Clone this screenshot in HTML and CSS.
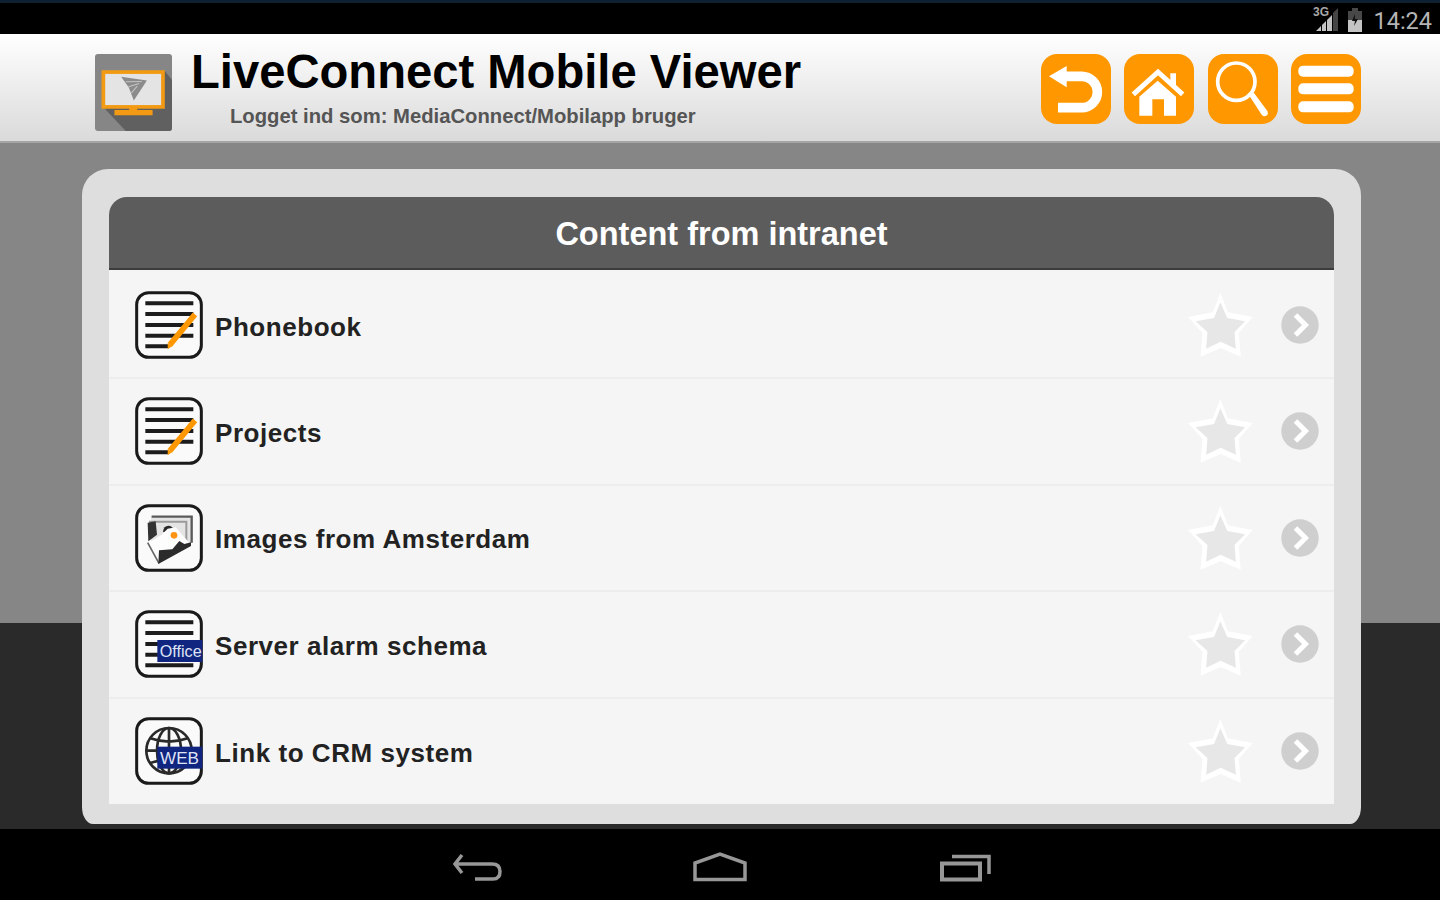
FILE: index.html
```
<!DOCTYPE html>
<html lang="da">

<head>
  <meta charset="utf-8">
  <meta content="width=device-width, initial-scale=1.0" name="viewport">
  <title>LiveConnect Mobile Viewer</title>
  <link rel="stylesheet" href="styles.css">
</head>

<body>

  <!-- Shared icons -->
  <svg class="sprite" aria-hidden="true">
    <symbol id="icon-frame" viewBox="0 0 204 204">
      <rect x="5" y="5" width="194" height="194" rx="36" fill="#fafafa" stroke="#1a1a1a" stroke-width="9"/>
    </symbol>
    <symbol id="icon-note" viewBox="0 0 204 204">
      <use href="#icon-frame"/>
      <path d="M31 37H175M31 69H175M31 102H175M31 134H175M31 166H102" stroke="#1c1c1c" stroke-width="12"/>
      <path d="M105 161L180 70" stroke="#ff9800" stroke-width="17"/>
      <path d="M98 155L112 166L98 174Z" fill="#ff9800"/>
    </symbol>
    <symbol id="icon-star" viewBox="0 0 200 200">
      <polygon points="98,2 121,61 196,76 154,124 160,196 99,170 38,196 44,124 0,76 75,61" fill="#fff"/>
      <polygon points="98,31 119,79 173,89 141,121 145,172 99,151 55,172 59,121 23,89 79,79" fill="#e7e7e7"/>
    </symbol>
    <symbol id="icon-next" viewBox="0 0 38 38">
      <circle cx="19" cy="19" r="18.700" fill="#cfcfcf"/>
      <path d="M14.500 9L24.500 19L14.500 29" fill="none" stroke="#fff" stroke-width="5"/>
    </symbol>
  </svg>

  <div class="status-bar">
    <svg class="signal" viewBox="0 0 26 26">
      <path d="M25 2V25H20V7Z" fill="#454545"/>
      <path d="M3 25L8 20V25ZM9 19L13 15V25H9ZM14 14L19 9V25H14Z" fill="#c4c4c4"/>
      <text x="0" y="10" font-size="12" fill="#a8a8a8">3G</text>
    </svg>
    <svg class="battery" viewBox="0 0 16 24">
      <path d="M5 0H11V3H15V24H1V3H5Z" fill="#484848"/>
      <rect x="1" y="12" width="14" height="12" fill="#c4c4c4"/>
      <path d="M8 6L5 13H8L7 18L11 11H8Z" fill="#111"/>
    </svg>
    <span class="clock">14:24</span>
  </div>

  <header class="header">
    <svg class="logo" viewBox="0 0 230 230">
      <rect width="230" height="230" rx="9" fill="#868686"/>
      <path d="M30 164L92 230H221A9 9 0 0 0 230 221V78L208 50Z" fill="#606060"/>
      <rect x="25" y="54" width="178" height="104" fill="#e4e4e4" stroke="#f39a14" stroke-width="11"/>
      <path d="M102 158H126V167H172V183H58V167H102Z" fill="#f39a14"/>
      <path d="M78 68L155 79L116 139L101 100Z" fill="#8b8b8b"/>
      <path d="M92 83L140 82M100 98L132 88M109 116L126 96" stroke="#c4c4c4" stroke-width="3"/>
    </svg>
    <div class="titles">
      <h1>LiveConnect Mobile Viewer</h1>
      <p>Logget ind som: MediaConnect/Mobilapp bruger</p>
    </div>
    <nav class="toolbar">
      <a href="#back" aria-label="Back">
        <svg viewBox="0 0 210 210">
          <path d="M24 67L77 36V100Z" fill="#fff"/>
          <path d="M74 67H122A47 47 0 0 1 122 161H51" fill="none" stroke="#fff" stroke-width="29"/>
        </svg>
      </a>
      <a href="#home" aria-label="Home">
        <svg viewBox="0 0 210 210">
          <path d="M28 121L102 54L176 121" fill="none" stroke="#fff" stroke-width="15"/>
          <path d="M139 58H156V100L139 84Z" fill="#fff"/>
          <path d="M46 128L101 80L156 128V185H120V136H85V185H46Z" fill="#fff"/>
        </svg>
      </a>
      <a href="#search" aria-label="Search">
        <svg viewBox="0 0 210 210">
          <circle cx="85" cy="83" r="56" fill="none" stroke="#fff" stroke-width="11"/>
          <path d="M119 118L129 133L161 182Q171 192 180 180L178 171L138 117Z" fill="#fff"/>
        </svg>
      </a>
      <a href="#menu" aria-label="Menu">
        <svg viewBox="0 0 210 210" fill="#fff">
          <rect x="22" y="35" width="166" height="33" rx="14"/>
          <rect x="22" y="88" width="166" height="33" rx="14"/>
          <rect x="22" y="142" width="166" height="33" rx="14"/>
        </svg>
      </a>
    </nav>
  </header>

  <main class="main">
    <div class="panel">
      <h2>Content from intranet</h2>
      <ul class="content-list">
        <li>
          <svg class="type-icon"><use href="#icon-note"/></svg>
          <span class="label">Phonebook</span>
          <svg class="star"><use href="#icon-star"/></svg>
          <svg class="next"><use href="#icon-next"/></svg>
        </li>
        <li>
          <svg class="type-icon"><use href="#icon-note"/></svg>
          <span class="label">Projects</span>
          <svg class="star"><use href="#icon-star"/></svg>
          <svg class="next"><use href="#icon-next"/></svg>
        </li>
        <li>
          <svg class="type-icon" viewBox="0 0 204 204">
            <use href="#icon-frame"/>
            <rect x="48" y="36" width="122" height="80" fill="#e4e4e4"/>
            <path d="M50 38H170V116" fill="none" stroke="#5a5a5a" stroke-width="7"/>
            <path d="M42 53H154V110" fill="none" stroke="#9a9a9a" stroke-width="6"/>
            <path d="M38 56L62 52L66 92L40 112Z" fill="#333"/>
            <path d="M84 84Q86 62 106 66L128 82Z" fill="#2a2a2a"/>
            <path d="M38 118L80 92L98 74L122 70L168 122L72 178Z" fill="#fdfdfd"/>
            <path d="M38 116L72 178" stroke="#666" stroke-width="5"/>
            <path d="M70 180L72 139L112 136L133 111L148 120L168 115V126Z" fill="#2b2b2b"/>
            <circle cx="117" cy="94" r="10" fill="#ff9313"/>
          </svg>
          <span class="label">Images from Amsterdam</span>
          <svg class="star"><use href="#icon-star"/></svg>
          <svg class="next"><use href="#icon-next"/></svg>
        </li>
        <li>
          <svg class="type-icon" viewBox="0 0 204 204">
            <use href="#icon-frame"/>
            <path d="M31 37H175M31 69H175M31 102H175M31 134H175M31 166H175" stroke="#1c1c1c" stroke-width="12"/>
            <rect x="67" y="90" width="135" height="66" fill="#10257f"/>
            <text x="74" y="141" font-size="50" textLength="126" lengthAdjust="spacingAndGlyphs" fill="#dfe3f6">Office</text>
          </svg>
          <span class="label">Server alarm schema</span>
          <svg class="star"><use href="#icon-star"/></svg>
          <svg class="next"><use href="#icon-next"/></svg>
        </li>
        <li>
          <svg class="type-icon" viewBox="0 0 204 204">
            <use href="#icon-frame"/>
            <g fill="none" stroke="#2a2a2a" stroke-width="8">
              <circle cx="102" cy="101" r="68"/>
              <ellipse cx="102" cy="101" rx="36" ry="68"/>
              <path d="M102 33V169M34 101H170M46 64Q102 84 158 64M46 138Q102 118 158 138"/>
            </g>
            <rect x="67" y="89" width="135" height="66" fill="#10257f"/>
            <text x="75" y="140" font-size="47" textLength="117" lengthAdjust="spacingAndGlyphs" fill="#dfe3f6">WEB</text>
          </svg>
          <span class="label">Link to CRM system</span>
          <svg class="star"><use href="#icon-star"/></svg>
          <svg class="next"><use href="#icon-next"/></svg>
        </li>
      </ul>
    </div>
  </main>

  <!-- Android navigation -->
  <footer class="nav-bar">
    <svg viewBox="0 0 56 32">
      <path d="M14 4L7 13L14 22M8 13H44Q52 13 52 20.500Q52 28 45 28H27" fill="none" stroke="#979797" stroke-width="3.500"/>
    </svg>
    <svg viewBox="0 0 56 32">
      <path d="M3 28.500V12L28 3L53 12V28.500Z" fill="none" stroke="#979797" stroke-width="3.500"/>
    </svg>
    <svg viewBox="0 0 56 32">
      <path d="M6 12.500H44V28.500H6Z" fill="none" stroke="#979797" stroke-width="4"/>
      <path d="M16 5.500H53V23" fill="none" stroke="#979797" stroke-width="3.500"/>
    </svg>
  </footer>

</body>

</html>
```
FILE: styles.css
```
* {
    box-sizing: border-box;
}

body {
    margin: 0;
    height: 900px;
    display: grid;
    grid-template-rows: 34px 109px 686px 71px;
    font-family: "Liberation Sans", Arial, sans-serif;
    font-weight: bold;
    background: #000;
    overflow: hidden;
}

h1, h2, p, ul {
    margin: 0;
    padding: 0;
}

svg {
    display: block;
    flex: none;
}

.sprite {
    position: absolute;
    width: 0;
    height: 0;
}

/* Status bar */
.status-bar {
    display: flex;
    justify-content: flex-end;
    align-items: flex-end;
    padding: 0 8px 2px 0;
    border-top: 3px solid #102033;
}

.signal {
    width: 26px;
    height: 26px;
    margin-right: 8px;
}

.battery {
    width: 16px;
    height: 24px;
    margin-right: 10px;
}

.clock {
    font: 23.5px/22px Roboto, sans-serif;
    color: #b4b4b4;
}

/* Header */
.header {
    display: flex;
    align-items: flex-start;
    padding: 0 79px 0 95px;
    background: linear-gradient(#fff, #dadada);
    border-bottom: 2px solid #a4a4a4;
}

.logo {
    width: 77px;
    height: 77px;
    margin-top: 20px;
}

.titles {
    flex: 1;
    padding: 11px 0 0 19px;
}

h1 {
    font-size: 47.2px;
    line-height: 54px;
    color: #000;
}

.titles p {
    padding: 1px 0 0 39px;
    font-size: 20.25px;
    line-height: 32px;
    color: #555;
}

.toolbar {
    display: flex;
    gap: 13.5px;
    margin-top: 20px;
}

.toolbar a {
    width: 70px;
    height: 70px;
    border-radius: 16px;
    background: #ff9800;
}

/* Content */
.main {
    padding: 26px 79px 5px 82px;
    background: linear-gradient(#868686 480px, #2a2a2a 480px);
    overflow: hidden;
    display: flex;
}

.panel {
    flex: 1;
    padding: 28px 27px 20px;
    background: #dedede;
    border-radius: 26px 26px 11px 11px / 26px 26px 17px 17px;
}

h2 {
    height: 73px;
    border-radius: 18px 18px 0 0;
    border-bottom: 2px solid #3c3c3c;
    background: #5c5c5c;
    color: #fff;
    font-size: 32.5px;
    line-height: 74px;
    text-align: center;
}

.content-list {
    list-style: none;
    background: #f5f5f5;
}

.content-list li {
    display: flex;
    align-items: center;
    height: 106.6px;
    padding: 0 15px 0 26px;
    border-bottom: 2px solid #ededed;
}

.content-list li:first-child {
    height: 109px;
    padding-top: 3px;
}

.content-list li:last-child {
    height: 105.2px;
    border-bottom: 0;
}

.type-icon {
    width: 68px;
    height: 68px;
}

.type-icon text {
    font-weight: normal;
}

.label {
    flex: 1;
    padding: 4px 0 0 12px;
    font-size: 26px;
    letter-spacing: 0.55px;
    color: #222;
}

.star {
    width: 66px;
    height: 66px;
    margin-right: 27px;
}

.next {
    width: 38px;
    height: 38px;
}

/* Bottom navigation */
.nav-bar {
    display: flex;
    justify-content: center;
    gap: 188px;
    padding-top: 22px;
}

.nav-bar svg {
    width: 56px;
    height: 32px;
}
```
